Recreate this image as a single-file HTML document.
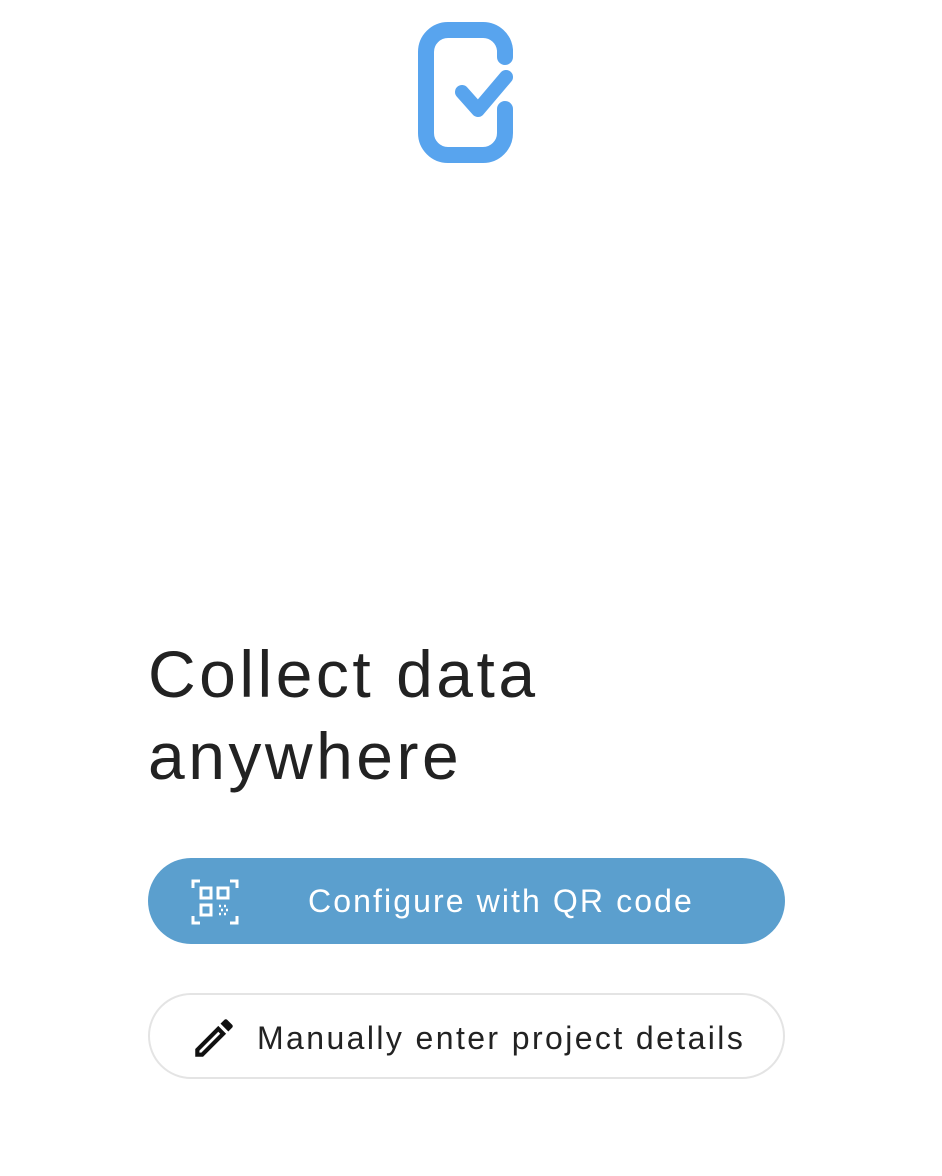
<!DOCTYPE html>
<html><head><style>
body{margin:0;width:942px;height:1176px;background:#fff;font-family:"Liberation Sans",sans-serif;position:relative;overflow:hidden}
h1{position:absolute;left:148px;top:633px;margin:0;font-weight:400;font-size:66px;line-height:82px;color:#222;letter-spacing:3.5px}
.b{position:absolute;left:148px;width:637px;height:86px;border-radius:43px;box-sizing:border-box}
.p{top:858px;background:#5b9fce;color:#fff;font-size:32px;letter-spacing:2.1px}
.o{top:993px;border:2px solid #e4e4e4;color:#222;font-size:32px;letter-spacing:2.4px}
.b span{position:absolute;top:0;line-height:86px}
</style></head><body>
<svg style="position:absolute;left:410px;top:14px" width="112" height="160" viewBox="0 0 112 160">
<path d="M95 43 V36 A22 22 0 0 0 73 16 H38 A22 22 0 0 0 16 38 V119 A22 22 0 0 0 38 141 H73 A22 22 0 0 0 95 119 V95" fill="none" stroke="#58a4ee" stroke-width="16" stroke-linecap="round"/>
<path d="M52 78 L68 96 L96 63" fill="none" stroke="#58a4ee" stroke-width="14" stroke-linecap="round" stroke-linejoin="round"/>
</svg>
<h1>Collect data<br>anywhere</h1>
<div class="b p">
<svg style="position:absolute;left:42px;top:20px" width="50" height="48" viewBox="0 0 50 48" fill="none" stroke="#fff" stroke-width="3">
<path d="M3 10V3H10M40 3H47V10M3 38V45H10M40 45H47V38"/>
<rect x="11" y="10" width="10" height="10"/><rect x="28" y="10" width="10" height="10"/><rect x="11" y="27" width="10" height="10"/>
<path d="M29 28h2M34 28h2M31 32h2M36 32h2M29 36h2M34 36h2" stroke-width="2.5"/>
</svg>
<span style="left:160px">Configure with QR code</span></div>
<div class="b o">
<svg style="position:absolute;left:38px;top:18px" width="52" height="50" viewBox="0 0 24 24"><path d="M3 17.25V21h3.75L17.81 9.94l-3.75-3.75L3 17.25zM5.92 19H5v-.92l9.06-9.06.92.92L5.92 19zM20.71 5.63l-2.34-2.34c-.2-.2-.45-.29-.71-.29s-.51.1-.7.29l-1.83 1.83 3.75 3.75 1.83-1.830a.996.996 0 0 0 0-1.41z" fill="#111"/></svg>
<span style="left:107px">Manually enter project details</span></div>
</body></html>
